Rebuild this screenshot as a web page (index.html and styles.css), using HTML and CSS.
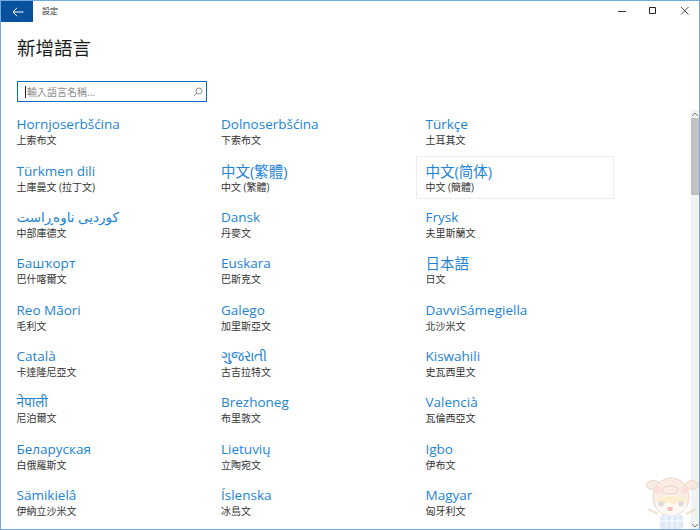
FILE: index.html
```html
<!DOCTYPE html>
<html lang="zh-Hant">
<head>
<meta charset="utf-8">
<title>設定</title>
<link rel="stylesheet" href="styles.css">
</head>
<body>
<div class="window">
  <header class="titlebar">
    <button class="back" aria-label="返回">
      <svg width="12" height="10" viewBox="0 0 12 10"><path d="M5 .8 1 5l4 4.200M1 5h10.500" fill="none" stroke="#fff" stroke-width="1"/></svg>
    </button>
    <span class="apptitle">設定</span>
    <div class="controls">
      <svg width="10" height="10" viewBox="0 0 10 10"><path d="M0 5.500h8" stroke="#333" stroke-width="1"/></svg>
      <svg width="10" height="10" viewBox="0 0 10 10"><path d="M1.500 1.500h6v6h-6z" fill="none" stroke="#222" stroke-width="1"/></svg>
      <svg class="close" width="10" height="10" viewBox="0 0 10 10"><path d="M1 1l7.500 7.500M8.500 1 1 8.500" fill="none" stroke="#333" stroke-width=".9"/></svg>
    </div>
  </header>
  <div class="body">
    <main class="content">
      <h1 class="heading">新增語言</h1>
      <div class="search">
        <span class="caret"></span>
        <span class="placeholder">輸入語言名稱...</span>
        <svg class="magnifier" width="10" height="10" viewBox="0 0 10 10"><circle cx="6" cy="4" r="3" fill="none" stroke="#888" stroke-width=".9"/><path d="M3.800 6.200.8 9.200" stroke="#888" stroke-width="1"/></svg>
      </div>
      <div class="grid">
        <div class="item"><div class="name">Hornjoserbšćina</div><div class="sub">上索布文</div></div>
        <div class="item"><div class="name">Dolnoserbšćina</div><div class="sub">下索布文</div></div>
        <div class="item"><div class="name">Türkçe</div><div class="sub">土耳其文</div></div>
        <div class="item"><div class="name">Türkmen dili</div><div class="sub">土庫曼文 (拉丁文)</div></div>
        <div class="item"><div class="name cjk">中文(繁體)</div><div class="sub">中文 (繁體)</div></div>
        <div class="item selected"><div class="name cjk">中文(简体)</div><div class="sub">中文 (簡體)</div></div>
        <div class="item"><div class="name">کوردیی ناوەڕاست</div><div class="sub">中部庫德文</div></div>
        <div class="item"><div class="name">Dansk</div><div class="sub">丹麥文</div></div>
        <div class="item"><div class="name">Frysk</div><div class="sub">夫里斯蘭文</div></div>
        <div class="item"><div class="name">Башҡорт</div><div class="sub">巴什喀爾文</div></div>
        <div class="item"><div class="name">Euskara</div><div class="sub">巴斯克文</div></div>
        <div class="item"><div class="name cjk">日本語</div><div class="sub">日文</div></div>
        <div class="item"><div class="name">Reo Māori</div><div class="sub">毛利文</div></div>
        <div class="item"><div class="name">Galego</div><div class="sub">加里斯亞文</div></div>
        <div class="item"><div class="name">DavviSámegiella</div><div class="sub">北沙米文</div></div>
        <div class="item"><div class="name">Català</div><div class="sub">卡達隆尼亞文</div></div>
        <div class="item"><div class="name">ગુજરાતી</div><div class="sub">古吉拉特文</div></div>
        <div class="item"><div class="name">Kiswahili</div><div class="sub">史瓦西里文</div></div>
        <div class="item"><div class="name">नेपाली</div><div class="sub">尼泊爾文</div></div>
        <div class="item"><div class="name">Brezhoneg</div><div class="sub">布里敦文</div></div>
        <div class="item"><div class="name">Valencià</div><div class="sub">瓦倫西亞文</div></div>
        <div class="item"><div class="name">Беларуская</div><div class="sub">白俄羅斯文</div></div>
        <div class="item"><div class="name">Lietuvių</div><div class="sub">立陶宛文</div></div>
        <div class="item"><div class="name">Igbo</div><div class="sub">伊布文</div></div>
        <div class="item"><div class="name">Sämikielâ</div><div class="sub">伊納立沙米文</div></div>
        <div class="item"><div class="name">Íslenska</div><div class="sub">冰島文</div></div>
        <div class="item"><div class="name">Magyar</div><div class="sub">匈牙利文</div></div>
      </div>
    </main>
    <div class="scrollbar">
      <div class="arrow">
        <svg width="8" height="5" viewBox="0 0 8 5"><path d="M1 4 4 1l3 3" fill="none" stroke="#777" stroke-width="1"/></svg>
      </div>
      <div class="thumb"></div>
      <div class="arrow arrow-down">
        <svg width="8" height="5" viewBox="0 0 8 5"><path d="M1 1l3 3 3-3" fill="none" stroke="#777" stroke-width="1"/></svg>
      </div>
    </div>
  </div>
  <svg class="mascot" width="54" height="52" viewBox="0 0 54 52">
    <ellipse cx="8" cy="8" rx="7" ry="4.500" fill="#f5e3d5" stroke="#e2cdbb"/>
    <ellipse cx="47" cy="8" rx="6.500" ry="4.500" fill="#f5e3d5" stroke="#e2cdbb"/>
    <ellipse cx="26" cy="20" rx="18" ry="19" fill="#f8e6d8" stroke="#e2cdbb"/>
    <circle cx="12" cy="13" r="3.500" fill="#f8d3cd"/>
    <circle cx="40" cy="13" r="3.500" fill="#f8d3cd"/>
    <ellipse cx="25" cy="13" rx="8" ry="4" fill="#fae8dc" stroke="#d8c2b0"/>
    <ellipse cx="26" cy="28" rx="15" ry="10" fill="#fff8f0"/>
    <path d="M11 22q15-6 30 0l-2 5-6-2-4 3-5-3-6 3-4-2z" fill="#fbe9bd"/>
    <circle cx="16" cy="27" r="2.800" fill="#cfcfcf"/>
    <circle cx="36" cy="27" r="2.800" fill="#cfcfcf"/>
    <path d="M22 30h6l-1 4h-4z" fill="#f3a9a9"/>
    <path d="M3 32l10 5M51 32l-10 5" stroke="#efdcc9" stroke-width="2.500"/>
    <rect x="15" y="38" width="23" height="14" rx="3" fill="#d5e3f7"/>
    <path d="M21 38v14M27 38v14M33 38v14M15 44h23" stroke="#fff" stroke-width="1"/>
  </svg>
</div>
</body>
</html>
```
FILE: styles.css
```css
* { box-sizing: border-box; }
html, body { margin: 0; padding: 0; height: 100%; }
body {
  width: 700px;
  height: 530px;
  overflow: hidden;
  background: #fff;
  font-family: "Open Sans", "Noto Sans", "Noto Sans CJK TC", "DejaVu Sans", sans-serif;
}
.window {
  position: relative;
  width: 700px;
  height: 530px;
  border: 1px solid #6fa9de;
  display: flex;
  flex-direction: column;
  overflow: hidden;
}
.titlebar {
  flex: none;
  height: 21px;
  display: flex;
  align-items: center;
}
.back {
  width: 32px;
  height: 21px;
  padding: 0 0 0 1px;
  border: 0;
  background: #07519f;
  display: flex;
  align-items: center;
  justify-content: center;
}
.apptitle {
  margin: 0 0 3px 9px;
  font-size: 8px;
  color: #333;
}
.controls {
  margin: 0 9.500px 1px auto;
  display: flex;
  gap: 20px;
  align-items: center;
}
.controls svg { display: block; }
.controls .close { margin-left: 1.500px; }
.body {
  flex: 1;
  min-height: 0;
  display: flex;
}
.content {
  flex: 1;
  min-width: 0;
  padding: 12px 0 0 16px;
  overflow: hidden;
}
.heading {
  margin: 0;
  height: 27px;
  font-size: 18.500px;
  line-height: 27px;
  font-weight: 400;
  color: #1a1a1a;
}
.search {
  width: 190px;
  height: 21px;
  margin-top: 20px;
  border: 1px solid #0a6cc4;
  display: flex;
  align-items: center;
  padding: 0 3px 0 7px;
}
.caret {
  width: 1px;
  height: 12px;
  background: #222;
  flex: none;
}
.placeholder {
  font-size: 10px;
  color: #8a8a8a;
  margin-left: 1px;
}
.magnifier { margin-left: auto; }
.grid {
  margin: 7.700px 0 0 -10px;
  display: grid;
  grid-template-columns: repeat(3, 198px);
  grid-auto-rows: 43px;
  column-gap: 6.500px;
  row-gap: 3.300px;
}
.item {
  padding: 4.800px 0 0 8.500px;
  border: 1.500px solid transparent;
}
.selected { border-color: #ececec; }
.name {
  font-size: 13.500px;
  line-height: 19px;
  height: 19px;
  color: #1c83d6;
  white-space: nowrap;
}
.cjk { font-size: 14.500px; }
.sub {
  font-size: 10px;
  line-height: 12px;
  color: #333;
  white-space: nowrap;
}
.scrollbar {
  flex: none;
  width: 8px;
  margin-top: 88px;
  background: #f2f2f2;
  display: flex;
  flex-direction: column;
}
.arrow {
  height: 8px;
  display: flex;
  align-items: center;
  justify-content: center;
  flex: none;
}
.arrow-down { margin-top: auto; }
.thumb {
  height: 77px;
  background: #c2c2c2;
  flex: none;
}
.mascot {
  position: absolute;
  right: 0;
  bottom: 0;
  opacity: .75;
}
```
